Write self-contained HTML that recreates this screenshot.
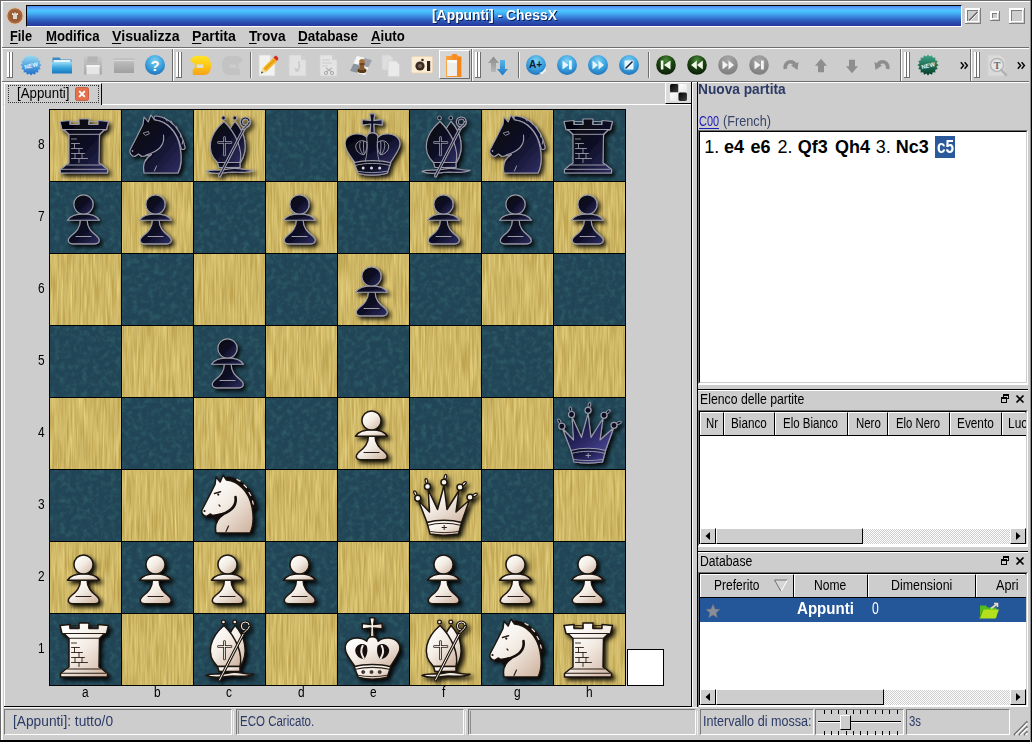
<!DOCTYPE html>
<html><head><meta charset="utf-8"><title>ChessX</title>
<style>
html,body{margin:0;padding:0;}
body{width:1032px;height:742px;overflow:hidden;background:#cdcdcd;font-family:"Liberation Sans",sans-serif;position:relative;}
.a{position:absolute;}
.t{position:absolute;white-space:nowrap;transform-origin:0 0;line-height:1;color:#000;}
.hl{position:absolute;height:1px;}
.vl{position:absolute;width:1px;}
.raised{position:absolute;box-sizing:border-box;border:1px solid;border-color:#fff #000 #000 #fff;background:#cdcdcd;}
.sunk{position:absolute;box-sizing:border-box;border:1px solid;border-color:#7a7a7a #fff #fff #7a7a7a;}
</style></head><body>

<div class="a" style="left:0px;top:0px;width:1032px;height:742px;background:#cdcdcd;"></div>
<div class="hl" style="left:0px;top:0px;width:1032px;background:#6a6a6a"></div>
<div class="vl" style="left:0px;top:0px;height:742px;background:#6a6a6a"></div>
<div class="hl" style="left:1px;top:1px;width:1029px;background:#fff"></div>
<div class="vl" style="left:1px;top:1px;height:739px;background:#fff"></div>
<div class="vl" style="left:2px;top:2px;height:738px;background:#f4f4f4"></div>
<div class="hl" style="left:0px;top:741px;width:1032px;background:#000"></div>
<div class="hl" style="left:0px;top:740px;width:1032px;background:#000"></div>
<div class="vl" style="left:1031px;top:0px;height:742px;background:#000"></div>
<div class="vl" style="left:1030px;top:1px;height:741px;background:#8a8a8a"></div>
<div class="a" style="left:26px;top:5px;width:936px;height:22px;box-sizing:border-box;border:1px solid;border-color:#000 #fff #fff #000;background:linear-gradient(#4a8af0 0%,#60a4fc 11%,#48c8fe 23%,#46b0f4 36%,#3a8ae0 52%,#3068c8 67%,#2a4cae 82%,#28389c 100%)"></div>
<div class="t" style="left:432px;top:8px;font-size:14px;transform:scaleX(0.992);color:#fff;font-weight:bold;text-shadow:1px 1px 0 #0c1c50">[Appunti] - ChessX</div>
<svg class="a" style="left:5px;top:6px" width="20" height="20" viewBox="0 0 20 20"><circle cx="10" cy="10" r="8.2" fill="#a86a40" stroke="#e8c8a8" stroke-width="1"/><circle cx="10" cy="10" r="6" fill="#9a5c34"/><rect x="8" y="8" width="4" height="5" fill="#d8d8d0"/><rect x="7" y="7" width="1.5" height="2" fill="#f0e8e0"/><rect x="11.5" y="7" width="1.5" height="2" fill="#f0e8e0"/><rect x="9.3" y="6.5" width="1.5" height="2" fill="#f0e8e0"/></svg>
<div class="a" style="left:965px;top:8px;width:15px;height:2px;background:#fff;"></div>
<div class="a" style="left:965px;top:8px;width:2px;height:15px;background:#fff;"></div>
<div class="a" style="left:980px;top:8px;width:1px;height:16px;background:#7c7c7c;"></div>
<div class="a" style="left:965px;top:23px;width:16px;height:1px;background:#7c7c7c;"></div>
<div class="a" style="left:967px;top:10px;width:12px;height:1px;background:#7c7c7c;"></div>
<div class="a" style="left:967px;top:10px;width:1px;height:12px;background:#7c7c7c;"></div>
<div class="a" style="left:978px;top:10px;width:1px;height:12px;background:#fff;"></div>
<div class="a" style="left:967px;top:21px;width:12px;height:1px;background:#fff;"></div>
<svg class="a" style="left:965px;top:8px" width="16" height="16"><line x1="4" y1="12.5" x2="12.5" y2="4" stroke="#555" stroke-width="1.1"/><line x1="5" y1="13" x2="13" y2="5" stroke="#fff" stroke-width="0.8"/></svg>
<div class="a" style="left:990px;top:11px;width:9px;height:2px;background:#fff;"></div>
<div class="a" style="left:990px;top:11px;width:2px;height:9px;background:#fff;"></div>
<div class="a" style="left:999px;top:11px;width:1px;height:10px;background:#7c7c7c;"></div>
<div class="a" style="left:990px;top:20px;width:10px;height:1px;background:#7c7c7c;"></div>
<div class="a" style="left:992px;top:13px;width:6px;height:1px;background:#7c7c7c;"></div>
<div class="a" style="left:992px;top:13px;width:1px;height:6px;background:#7c7c7c;"></div>
<div class="a" style="left:997px;top:13px;width:1px;height:6px;background:#fff;"></div>
<div class="a" style="left:992px;top:18px;width:6px;height:1px;background:#fff;"></div>
<div class="a" style="left:1009px;top:8px;width:15px;height:2px;background:#fff;"></div>
<div class="a" style="left:1009px;top:8px;width:2px;height:15px;background:#fff;"></div>
<div class="a" style="left:1024px;top:8px;width:1px;height:16px;background:#7c7c7c;"></div>
<div class="a" style="left:1009px;top:23px;width:16px;height:1px;background:#7c7c7c;"></div>
<div class="a" style="left:1011px;top:10px;width:12px;height:1px;background:#7c7c7c;"></div>
<div class="a" style="left:1011px;top:10px;width:1px;height:12px;background:#7c7c7c;"></div>
<div class="a" style="left:1022px;top:10px;width:1px;height:12px;background:#fff;"></div>
<div class="a" style="left:1011px;top:21px;width:12px;height:1px;background:#fff;"></div>
<div class="t" style="left:10px;top:29px;font-size:14px;transform:scaleX(0.912);color:#000;font-weight:bold;text-underline-offset:2px"><u>F</u>ile</div>
<div class="t" style="left:45.5px;top:29px;font-size:14px;transform:scaleX(0.942);color:#000;font-weight:bold;text-underline-offset:2px"><u>M</u>odifica</div>
<div class="t" style="left:112px;top:29px;font-size:14px;transform:scaleX(1.013);color:#000;font-weight:bold;text-underline-offset:2px"><u>V</u>isualizza</div>
<div class="t" style="left:192px;top:29px;font-size:14px;transform:scaleX(1.005);color:#000;font-weight:bold;text-underline-offset:2px"><u>P</u>artita</div>
<div class="t" style="left:248.6px;top:29px;font-size:14px;transform:scaleX(0.977);color:#000;font-weight:bold;text-underline-offset:2px"><u>T</u>rova</div>
<div class="t" style="left:298px;top:29px;font-size:14px;transform:scaleX(0.964);color:#000;font-weight:bold;text-underline-offset:2px"><u>D</u>atabase</div>
<div class="t" style="left:370.7px;top:29px;font-size:14px;transform:scaleX(0.942);color:#000;font-weight:bold;text-underline-offset:2px"><u>A</u>iuto</div>
<div class="hl" style="left:2px;top:47px;width:1027px;background:#6e6e6e"></div>
<div class="hl" style="left:2px;top:48px;width:1027px;background:#fff"></div>
<div class="hl" style="left:2px;top:81px;width:1027px;background:#6e6e6e"></div>
<div class="hl" style="left:2px;top:82px;width:1027px;background:#fff"></div>
<div class="a" style="left:7px;top:52px;width:2px;height:25px;background:#fff"></div><div class="a" style="left:9px;top:52px;width:1px;height:26px;background:#6e6e6e"></div><div class="a" style="left:7px;top:77px;width:2px;height:1px;background:#6e6e6e"></div><div class="a" style="left:10px;top:52px;width:2px;height:25px;background:#fff"></div><div class="a" style="left:12px;top:52px;width:1px;height:26px;background:#6e6e6e"></div><div class="a" style="left:10px;top:77px;width:2px;height:1px;background:#6e6e6e"></div>
<svg class="a" style="left:20px;top:54px;" width="22" height="22" viewBox="0 0 22 22"><defs><linearGradient id="gnb" x1="0" y1="0" x2="0" y2="1"><stop offset="0" stop-color="#9ae0f6"/><stop offset="1" stop-color="#1a6cc8"/></linearGradient></defs><polygon points="21.5,11.0 19.4,12.7 20.7,15.0 18.2,15.8 18.4,18.4 15.8,18.2 15.0,20.7 12.7,19.4 11.0,21.5 9.3,19.4 7.0,20.7 6.2,18.2 3.6,18.4 3.8,15.8 1.3,15.0 2.6,12.7 0.5,11.0 2.6,9.3 1.3,7.0 3.8,6.2 3.6,3.6 6.2,3.8 7.0,1.3 9.3,2.6 11.0,0.5 12.7,2.6 15.0,1.3 15.8,3.8 18.4,3.6 18.2,6.2 20.7,7.0 19.4,9.3" fill="url(#gnb)"/><text x="11" y="13.6" font-family="Liberation Sans" font-weight="bold" font-size="5.8" fill="#e8f6ff" text-anchor="middle" transform="rotate(-14 11 11)">NEW</text></svg>
<svg class="a" style="left:51px;top:55px;" width="22" height="20" viewBox="0 0 22 20"><defs><linearGradient id="gfo" x1="0" y1="0" x2="0" y2="1"><stop offset="0" stop-color="#9adcf6"/><stop offset="0.5" stop-color="#3aa4de"/><stop offset="1" stop-color="#1a78c0"/></linearGradient></defs><path d="M1.5,2.5 h7 l1.5,2 h10.5 v3 h-19 z" fill="#3a8cc4"/><rect x="2.5" y="5" width="17" height="4" fill="#e8f4fa"/><path d="M1,7 h20 v11.5 h-20 z" fill="url(#gfo)"/></svg>
<svg class="a" style="left:83px;top:55px;" width="20" height="21" viewBox="0 0 20 21"><defs><linearGradient id="gfl" x1="0" y1="0" x2="0" y2="1"><stop offset="0" stop-color="#c8c8c8"/><stop offset="1" stop-color="#a8a8a8"/></linearGradient></defs><path d="M1,1.5 h16 l2,2 v16 h-18 z" fill="url(#gfl)"/><rect x="4.5" y="1.5" width="10" height="6" fill="#b4b4b4"/><rect x="3.5" y="10" width="13" height="9.5" fill="#e6e6e6"/><rect x="3.5" y="10" width="13" height="2" fill="#f4f4f4"/></svg>
<svg class="a" style="left:112px;top:56px;" width="24" height="19" viewBox="0 0 24 19"><defs><linearGradient id="ggf" x1="0" y1="0" x2="0" y2="1"><stop offset="0" stop-color="#bcbcbc"/><stop offset="1" stop-color="#a0a0a0"/></linearGradient></defs><rect x="1.5" y="2" width="21" height="3" fill="#c0c0c0"/><rect x="2" y="5" width="20" height="12" fill="url(#ggf)"/><rect x="1.5" y="4" width="21" height="1.2" fill="#d8d8d8"/></svg>
<svg class="a" style="left:144px;top:54px;" width="22" height="22" viewBox="0 0 22 22"><defs><radialGradient id="ghp" cx="0.5" cy="0.3" r="0.75"><stop offset="0" stop-color="#7fd2f4"/><stop offset="0.55" stop-color="#3aa0dc"/><stop offset="1" stop-color="#1a6cb8"/></radialGradient></defs><circle cx="11" cy="11" r="10" fill="url(#ghp)"/><text x="11" y="16.5" font-family="Liberation Sans" font-weight="bold" font-size="15" fill="#fff" text-anchor="middle">?</text></svg>
<div class="vl" style="left:172px;top:49px;height:32px;background:#6e6e6e"></div><div class="vl" style="left:173px;top:49px;height:32px;background:#fff"></div>
<div class="a" style="left:176px;top:52px;width:2px;height:25px;background:#fff"></div><div class="a" style="left:178px;top:52px;width:1px;height:26px;background:#6e6e6e"></div><div class="a" style="left:176px;top:77px;width:2px;height:1px;background:#6e6e6e"></div><div class="a" style="left:179px;top:52px;width:2px;height:25px;background:#fff"></div><div class="a" style="left:181px;top:52px;width:1px;height:26px;background:#6e6e6e"></div><div class="a" style="left:179px;top:77px;width:2px;height:1px;background:#6e6e6e"></div>
<svg class="a" style="left:189px;top:54px;" width="24" height="22" viewBox="0 0 24 22"><defs><linearGradient id="gun" x1="0" y1="0" x2="0" y2="1"><stop offset="0" stop-color="#ffe428"/><stop offset="0.5" stop-color="#fdc814"/><stop offset="1" stop-color="#f6a21a"/></linearGradient></defs><path fill-rule="evenodd" d="M1.500,5 L6,1.800 L15,2 C20,2 22,6.500 22,11.500 C22,17 20,21 15,21 L4,21 L3.500,16 L6,13.500 L5.500,9.500 L1.500,7.500 Z M7.700,10.500 h6.500 v3.300 h-6.500 z" fill="url(#gun)"/><rect x="7.700" y="10.500" width="6.500" height="3.300" fill="#e4e2cc"/></svg>
<svg class="a" style="left:220px;top:54px;" width="24" height="22" viewBox="0 0 24 22"><path fill-rule="evenodd" d="M22.500,5 L18,1.800 L9,2 C4,2 2,6.500 2,11.500 C2,17 4,21 9,21 L20,21 L20.500,16 L18,13.500 L18.500,9.500 L22.500,7.500 Z M9.800,10.500 h6.500 v3.300 h-6.500 z" fill="#c3c3c3"/></svg>
<div class="vl" style="left:250px;top:52px;height:26px;background:#6e6e6e"></div><div class="vl" style="left:251px;top:52px;height:26px;background:#f4f4f4"></div>
<svg class="a" style="left:256px;top:53px;" width="24" height="25" viewBox="0 0 24 25"><path d="M3,2 h11 l5,5 v16 h-16 z" fill="#f2f2f0" stroke="#d4d4d4" stroke-width="0.8"/><path d="M14,2 v5 h5 z" fill="#dcdcdc"/><path d="M5,20.5 L7,15 L17.5,4.5 L21,8 L10.5,18.5 Z" fill="#f4b21c"/><path d="M17.5,4.5 L19,3 C20,2.2 22.8,5 22.3,6 L21,8 Z" fill="#d8282a"/><path d="M5,20.5 L7,15 L10.5,18.5 Z" fill="#f0d8a0"/><path d="M5,20.5 L5.8,18.3 L7.2,19.7 Z" fill="#3a3a3a"/><path d="M8.6,16.6 L19.2,6.2" stroke="#d88a10" stroke-width="1" fill="none"/></svg>
<svg class="a" style="left:287px;top:53px;" width="22" height="25" viewBox="0 0 22 25"><path d="M2,2 h12 l5,5 v16 h-17 z" fill="#e2e2e2" stroke="#d2d2d2" stroke-width="0.8"/><path d="M14,2 v5 h5 z" fill="#cfcfcf"/><path d="M12,8 C9,11 14,12 10,16 L7,15 L9,19 L13,18 L11.5,16.8 C16,13 10.5,11 13.5,8 Z" fill="#cacaca"/></svg>
<svg class="a" style="left:318px;top:53px;" width="22" height="25" viewBox="0 0 22 25"><path d="M2,2 h12 l5,5 v16 h-17 z" fill="#e4e4e4" stroke="#d2d2d2" stroke-width="0.8"/><path d="M14,2 v5 h5 z" fill="#cfcfcf"/><path d="M4,7 h8 M4,10 h10 M4,13 h6" stroke="#cacaca" stroke-width="1"/><path d="M8,15 l6,4 M14,15 l-6,4" stroke="#b4b4b4" stroke-width="1.3"/><circle cx="8" cy="20" r="1.6" fill="none" stroke="#a8a8a8"/><circle cx="14" cy="20" r="1.6" fill="none" stroke="#a8a8a8"/></svg>
<svg class="a" style="left:349px;top:54px;" width="24" height="23" viewBox="0 0 24 23"><path d="M8,2 L23,6 L16,21 L1,17 Z" fill="#e8e8e8"/><path d="M8,2 L15.5,4 L12,11.5 L4.5,9.5 Z" fill="#f6f6f6"/><path d="M15.5,4 L23,6 L19.5,13.5 L12,11.5 Z" fill="#9aa0a8"/><path d="M4.500,9.5 L12,11.5 L8.5,19 L1,17 Z" fill="#8e949c"/><path d="M12,11.5 L19.5,13.5 L16,21 L8.500,19 Z" fill="#f0f0f0"/><ellipse cx="13" cy="16.5" rx="4.5" ry="2.6" fill="#5c3a1a"/><path d="M10.5,16 C10.5,12 11.5,11 11,9.5 h4 C14.500,11 15.5,12 15.500,16 Z" fill="#8a5a2a"/><ellipse cx="13" cy="7.5" rx="2.8" ry="2.6" fill="#a87038"/><ellipse cx="13" cy="10" rx="3.2" ry="1.1" fill="#6a4420"/></svg>
<svg class="a" style="left:380px;top:53px;" width="22" height="25" viewBox="0 0 22 25"><path d="M2,2 h8 l3,3 v12 h-11 z" fill="#dedede" stroke="#d0d0d0" stroke-width="0.8"/><path d="M8,8 h8 l3.500,3.500 v12 h-11.5 z" fill="#eaeaea" stroke="#d4d4d4" stroke-width="0.8"/></svg>
<svg class="a" style="left:410px;top:55px;" width="24" height="20" viewBox="0 0 24 20"><rect x="1.5" y="1.5" width="21" height="16.500" rx="1.5" fill="#fbecd4" stroke="#ecd4b0" stroke-width="0.8"/><circle cx="10" cy="11" r="4.600" fill="#3a2a22"/><circle cx="10" cy="11" r="2" fill="#7a6458"/><circle cx="12.5" cy="5" r="1.300" fill="#3a2a22"/><rect x="17" y="6" width="3.200" height="10" fill="#2a2220"/></svg>
<div class="a" style="left:439px;top:50px;width:31px;height:29px;box-sizing:border-box;border:1px solid;border-color:#fff #6e6e6e #6e6e6e #fff;background:#d6d6d6"></div>
<svg class="a" style="left:444px;top:52px;" width="20" height="26" viewBox="0 0 20 26"><defs><linearGradient id="gcl" x1="0" y1="0" x2="1" y2="0"><stop offset="0" stop-color="#f8a848"/><stop offset="0.6" stop-color="#f68a1e"/><stop offset="1" stop-color="#f8b060"/></linearGradient></defs><path d="M2,4 h5 l1.500,-2 h4 l1.500,2 h3.500 v21 h-15.500 z" fill="url(#gcl)"/><rect x="3" y="8" width="10" height="16" fill="#f0eeec"/><rect x="3" y="8" width="10" height="3" fill="#fafafa"/><rect x="13.200" y="5" width="4" height="20" fill="#f6861a"/></svg>
<div class="vl" style="left:471px;top:49px;height:32px;background:#6e6e6e"></div><div class="vl" style="left:472px;top:49px;height:32px;background:#fff"></div>
<div class="a" style="left:475px;top:52px;width:2px;height:25px;background:#fff"></div><div class="a" style="left:477px;top:52px;width:1px;height:26px;background:#6e6e6e"></div><div class="a" style="left:475px;top:77px;width:2px;height:1px;background:#6e6e6e"></div><div class="a" style="left:478px;top:52px;width:2px;height:25px;background:#fff"></div><div class="a" style="left:480px;top:52px;width:1px;height:26px;background:#6e6e6e"></div><div class="a" style="left:478px;top:77px;width:2px;height:1px;background:#6e6e6e"></div>
<svg class="a" style="left:487px;top:55px;" width="22" height="22" viewBox="0 0 22 22"><defs><linearGradient id="gua" x1="0" y1="0" x2="0" y2="1"><stop offset="0" stop-color="#8a8a8a"/><stop offset="1" stop-color="#b8b8b8"/></linearGradient><linearGradient id="gda" x1="0" y1="0" x2="0" y2="1"><stop offset="0" stop-color="#5ab4e8"/><stop offset="1" stop-color="#1c78c4"/></linearGradient></defs><path d="M6.500,1.500 L12,8 L9,8 L9,17 L4,17 L4,8 L1,8 Z" fill="url(#gua)"/><path d="M15.500,20.5 L21,14 L18,14 L18,5 L13,5 L13,14 L10,14 Z" fill="url(#gda)"/></svg>
<div class="vl" style="left:518px;top:52px;height:26px;background:#6e6e6e"></div><div class="vl" style="left:519px;top:52px;height:26px;background:#f4f4f4"></div>
<svg class="a" style="left:525px;top:54px;" width="22" height="22" viewBox="0 0 22 22"><defs><radialGradient id="ga1" cx="0.5" cy="0.3" r="0.75"><stop offset="0" stop-color="#7fd2f4"/><stop offset="0.55" stop-color="#3aa0dc"/><stop offset="1" stop-color="#1a6cb8"/></radialGradient></defs><circle cx="11" cy="11" r="10" fill="url(#ga1)"/><path d="M14,19 C18,18 20,15 20.5,12 L21,17 L17,20.5 Z" fill="#e8f0f8"/><text x="10.5" y="14" font-family="Liberation Sans" font-weight="bold" font-size="10" fill="#0a1a3a" text-anchor="middle">A+</text></svg>
<svg class="a" style="left:556px;top:54px;" width="22" height="22" viewBox="0 0 22 22"><defs><radialGradient id="ga2" cx="0.5" cy="0.3" r="0.75"><stop offset="0" stop-color="#7fd2f4"/><stop offset="0.55" stop-color="#3aa0dc"/><stop offset="1" stop-color="#1a6cb8"/></radialGradient></defs><circle cx="11" cy="11" r="10" fill="url(#ga2)"/><path d="M6.500,6.500 L12.500,11 L6.500,15.500 Z" fill="#eaf6ff"/><rect x="13" y="6.500" width="2.800" height="9" fill="#eaf6ff"/></svg>
<svg class="a" style="left:587px;top:54px;" width="22" height="22" viewBox="0 0 22 22"><defs><radialGradient id="ga3" cx="0.5" cy="0.3" r="0.75"><stop offset="0" stop-color="#7fd2f4"/><stop offset="0.55" stop-color="#3aa0dc"/><stop offset="1" stop-color="#1a6cb8"/></radialGradient></defs><circle cx="11" cy="11" r="10" fill="url(#ga3)"/><path d="M5.500,6.500 L11,11 L5.500,15.500 Z M11.500,6.500 L17,11 L11.500,15.500 Z" fill="#eaf6ff"/></svg>
<svg class="a" style="left:618px;top:54px;" width="22" height="22" viewBox="0 0 22 22"><defs><radialGradient id="ga4" cx="0.5" cy="0.3" r="0.75"><stop offset="0" stop-color="#7fd2f4"/><stop offset="0.55" stop-color="#3aa0dc"/><stop offset="1" stop-color="#1a6cb8"/></radialGradient></defs><circle cx="11" cy="11" r="10" fill="url(#ga4)"/><rect x="6.500" y="6.500" width="9" height="9" fill="#eaf6ff"/><path d="M7.500,14.500 L14.500,7.500" stroke="#1a2a4a" stroke-width="1.600"/></svg>
<div class="vl" style="left:648px;top:52px;height:26px;background:#6e6e6e"></div><div class="vl" style="left:649px;top:52px;height:26px;background:#f4f4f4"></div>
<svg class="a" style="left:655px;top:54px;" width="22" height="22" viewBox="0 0 22 22"><defs><radialGradient id="gd1" cx="0.5" cy="0.25" r="0.8"><stop offset="0" stop-color="#4a8a3a"/><stop offset="0.45" stop-color="#1c4412"/><stop offset="1" stop-color="#081806"/></radialGradient></defs><circle cx="11" cy="11" r="9.8" fill="url(#gd1)"/><rect x="5.800" y="6.500" width="2.600" height="9" fill="#f0f8e8"/><path d="M15.500,6.500 L9,11 L15.500,15.500 Z" fill="#f0f8e8"/></svg>
<svg class="a" style="left:686px;top:54px;" width="22" height="22" viewBox="0 0 22 22"><defs><radialGradient id="gd2" cx="0.5" cy="0.25" r="0.8"><stop offset="0" stop-color="#4a8a3a"/><stop offset="0.45" stop-color="#1c4412"/><stop offset="1" stop-color="#081806"/></radialGradient></defs><circle cx="11" cy="11" r="9.8" fill="url(#gd2)"/><path d="M10.800,6.500 L5,11 L10.800,15.500 Z M16.800,6.500 L11,11 L16.800,15.500 Z" fill="#f0f8e8"/></svg>
<svg class="a" style="left:717px;top:54px;" width="22" height="22" viewBox="0 0 22 22"><defs><radialGradient id="gd3" cx="0.5" cy="0.25" r="0.8"><stop offset="0" stop-color="#a8a8a8"/><stop offset="0.6" stop-color="#8c8c8c"/><stop offset="1" stop-color="#7a7a7a"/></radialGradient></defs><circle cx="11" cy="11" r="9.8" fill="url(#gd3)"/><path d="M5.500,6.500 L11,11 L5.500,15.500 Z M11.500,6.500 L17,11 L11.500,15.500 Z" fill="#f4f4f4"/></svg>
<svg class="a" style="left:748px;top:54px;" width="22" height="22" viewBox="0 0 22 22"><defs><radialGradient id="gd4" cx="0.5" cy="0.25" r="0.8"><stop offset="0" stop-color="#a8a8a8"/><stop offset="0.6" stop-color="#8c8c8c"/><stop offset="1" stop-color="#7a7a7a"/></radialGradient></defs><circle cx="11" cy="11" r="9.8" fill="url(#gd4)"/><path d="M6.500,6.500 L12.500,11 L6.500,15.500 Z" fill="#f4f4f4"/><rect x="13" y="6.500" width="2.800" height="9" fill="#f4f4f4"/></svg>
<svg class="a" style="left:779px;top:54px;" width="22" height="22" viewBox="0 0 22 22"><path d="M6.300,15 C5.500,9.500 9.500,7 13,8 C14.500,8.500 15.500,9.500 16,10.500" fill="none" stroke="#8e8e8e" stroke-width="3.600"/><path d="M12,11.500 L19.500,8 L18.500,16 Z" fill="#8e8e8e"/></svg>
<svg class="a" style="left:811px;top:56px;" width="20" height="20" viewBox="0 0 20 20"><path d="M10,2.800 L16,9.800 L13,9.800 L13,16.200 L7,16.200 L7,9.800 L4,9.800 Z" fill="#8e8e8e"/></svg>
<svg class="a" style="left:842px;top:56px;" width="20" height="20" viewBox="0 0 20 20"><path d="M10,17.200 L16,10.200 L13,10.200 L13,3.800 L7,3.800 L7,10.200 L4,10.200 Z" fill="#8e8e8e"/></svg>
<svg class="a" style="left:872px;top:54px;" width="22" height="22" viewBox="0 0 22 22"><path d="M15.700,15 C16.500,9.500 12.500,7 9,8 C7.500,8.500 6.500,9.500 6,10.500" fill="none" stroke="#8e8e8e" stroke-width="3.600"/><path d="M10,11.500 L2.500,8 L3.500,16 Z" fill="#8e8e8e"/></svg>
<div class="vl" style="left:900px;top:49px;height:32px;background:#6e6e6e"></div><div class="vl" style="left:901px;top:49px;height:32px;background:#fff"></div>
<div class="a" style="left:904px;top:52px;width:2px;height:25px;background:#fff"></div><div class="a" style="left:906px;top:52px;width:1px;height:26px;background:#6e6e6e"></div><div class="a" style="left:904px;top:77px;width:2px;height:1px;background:#6e6e6e"></div><div class="a" style="left:907px;top:52px;width:2px;height:25px;background:#fff"></div><div class="a" style="left:909px;top:52px;width:1px;height:26px;background:#6e6e6e"></div><div class="a" style="left:907px;top:77px;width:2px;height:1px;background:#6e6e6e"></div>
<svg class="a" style="left:917px;top:54px;" width="22" height="22" viewBox="0 0 22 22"><defs><linearGradient id="gng" x1="0" y1="0" x2="0" y2="1"><stop offset="0" stop-color="#3ea888"/><stop offset="1" stop-color="#063a26"/></linearGradient></defs><polygon points="21.5,11.0 19.4,12.7 20.7,15.0 18.2,15.8 18.4,18.4 15.8,18.2 15.0,20.7 12.7,19.4 11.0,21.5 9.3,19.4 7.0,20.7 6.2,18.2 3.6,18.4 3.8,15.8 1.3,15.0 2.6,12.7 0.5,11.0 2.6,9.3 1.3,7.0 3.8,6.2 3.6,3.6 6.2,3.8 7.0,1.3 9.3,2.6 11.0,0.5 12.7,2.6 15.0,1.3 15.8,3.8 18.4,3.6 18.2,6.2 20.7,7.0 19.4,9.3" fill="url(#gng)"/><text x="11" y="13.6" font-family="Liberation Sans" font-weight="bold" font-size="5.8" fill="#e8f6ff" text-anchor="middle" transform="rotate(-14 11 11)">NEW</text></svg>
<svg class="a" style="left:960px;top:61px" width="9" height="9" viewBox="0 0 9 9"><path d="M0.800,1.300 L3.600,4.500 L0.800,7.700 M4.600,1.300 L7.400,4.500 L4.600,7.700" fill="none" stroke="#000" stroke-width="1.400"/></svg>
<div class="vl" style="left:970px;top:49px;height:32px;background:#6e6e6e"></div><div class="vl" style="left:971px;top:49px;height:32px;background:#fff"></div>
<div class="a" style="left:974px;top:52px;width:2px;height:25px;background:#fff"></div><div class="a" style="left:976px;top:52px;width:1px;height:26px;background:#6e6e6e"></div><div class="a" style="left:974px;top:77px;width:2px;height:1px;background:#6e6e6e"></div><div class="a" style="left:977px;top:52px;width:2px;height:25px;background:#fff"></div><div class="a" style="left:979px;top:52px;width:1px;height:26px;background:#6e6e6e"></div><div class="a" style="left:977px;top:77px;width:2px;height:1px;background:#6e6e6e"></div>
<svg class="a" style="left:985px;top:53px;" width="24" height="26" viewBox="0 0 24 26"><path d="M3,2 h12 l5,5 v16 h-17 z" fill="#dadada" stroke="#d0d0d0" stroke-width="0.8"/><circle cx="12" cy="12" r="6.500" fill="#e6e6e6" stroke="#b8b8b8" stroke-width="1.500"/><path d="M16.500,17 L21,22" stroke="#b0b0b0" stroke-width="2.500" stroke-linecap="round"/><text x="12" y="16" font-family="Liberation Serif" font-weight="bold" font-size="10" fill="#6a6a6a" text-anchor="middle">T</text></svg>
<svg class="a" style="left:1017px;top:61px" width="9" height="9" viewBox="0 0 9 9"><path d="M0.800,1.300 L3.600,4.500 L0.800,7.700 M4.600,1.300 L7.400,4.500 L4.600,7.700" fill="none" stroke="#000" stroke-width="1.400"/></svg>
<div class="hl" style="left:102px;top:104px;width:589px;background:#fff"></div>
<div class="vl" style="left:4px;top:84px;height:622px;background:#fff"></div>
<div class="a" style="left:4px;top:83px;width:98px;height:22px;box-sizing:border-box;border:1px solid;border-color:#fff #000 #cdcdcd #fff;background:#cdcdcd"></div>
<div class="vl" style="left:101px;top:84px;height:21px;background:#000"></div>
<div class="a" style="left:8px;top:85px;width:91px;height:18px;box-sizing:border-box;border:1px dotted #333"></div>
<div class="t" style="left:17px;top:86px;font-size:14px;transform:scaleX(0.950);color:#000;font-weight:normal;">[Appunti]</div>
<svg class="a" style="left:75px;top:87px" width="14" height="14" viewBox="0 0 15 15"><rect x="0.500" y="0.500" width="14" height="14" rx="2" fill="#e4704c" stroke="#c85a3c"/><path d="M4.500,4.500 L10.500,10.500 M10.500,4.500 L4.500,10.500" stroke="#fff" stroke-width="2"/></svg>
<div class="a" style="left:665px;top:82px;width:27px;height:22px;box-sizing:border-box;border:1px solid;border-color:#fff #000 #000 #fff;background:#dcdcdc"></div>
<svg class="a" style="left:669px;top:83px" width="19" height="19" viewBox="0 0 18 18"><defs><linearGradient id="ck1" x1="0" y1="0" x2="1" y2="1"><stop offset="0" stop-color="#000"/><stop offset="1" stop-color="#444"/></linearGradient><linearGradient id="ck2" x1="0" y1="0" x2="1" y2="1"><stop offset="0" stop-color="#fff"/><stop offset="1" stop-color="#e6e6e6"/></linearGradient></defs><rect x="1" y="1" width="8" height="8" rx="1.500" fill="url(#ck1)"/><rect x="9" y="1" width="8" height="8" rx="1.500" fill="url(#ck2)"/><rect x="1" y="9" width="8" height="8" rx="1.500" fill="url(#ck2)"/><rect x="9" y="9" width="8" height="8" rx="1.500" fill="url(#ck1)"/></svg>
<svg class="a" style="left:49px;top:109px" width="577" height="577" viewBox="0 0 577 577">
<defs>
<linearGradient id="gw" x1="0.15" y1="0.1" x2="0.9" y2="0.95"><stop offset="0" stop-color="#ffffff"/><stop offset="0.45" stop-color="#f3ece4"/><stop offset="1" stop-color="#d2b8a6"/></linearGradient>
<linearGradient id="gb" x1="0.1" y1="0.1" x2="0.95" y2="0.9"><stop offset="0" stop-color="#03030c"/><stop offset="0.55" stop-color="#101029"/><stop offset="1" stop-color="#2b2a5c"/></linearGradient>
<linearGradient id="gbq" x1="0.1" y1="0.1" x2="0.95" y2="0.9"><stop offset="0" stop-color="#080820"/><stop offset="0.5" stop-color="#26245c"/><stop offset="1" stop-color="#46438e"/></linearGradient>
<filter id="sh" x="-20%" y="-20%" width="150%" height="150%"><feDropShadow dx="2.6" dy="2.8" stdDeviation="1.9" flood-color="#000" flood-opacity="0.95"/></filter>
<filter id="nz" color-interpolation-filters="sRGB" x="0" y="0" width="100%" height="100%"><feTurbulence type="fractalNoise" baseFrequency="0.18" numOctaves="3" seed="4" result="n"/><feColorMatrix in="n" type="matrix" values="0 0 0 0 0.19  0 0 0 0 0.38  0 0 0 0 0.42  1.8 0 0 0 -0.78"/></filter>
<filter id="w1" color-interpolation-filters="sRGB" x="0" y="0" width="100%" height="100%"><feTurbulence type="fractalNoise" baseFrequency="0.5 0.025" numOctaves="2" seed="11" result="n"/><feColorMatrix in="n" type="matrix" values="0 0 0 0 0.93  0 0 0 0 0.85  0 0 0 0 0.52  1.6 0 0 0 -0.55"/></filter>
<filter id="w2" color-interpolation-filters="sRGB" x="0" y="0" width="100%" height="100%"><feTurbulence type="fractalNoise" baseFrequency="0.55 0.03" numOctaves="2" seed="23" result="n"/><feColorMatrix in="n" type="matrix" values="0 0 0 0 0.70  0 0 0 0 0.58  0 0 0 0 0.24  1.6 0 0 0 -0.66"/></filter>
<g id="wK"><g transform="translate(-0.8,0.3)"><path d="M33.5,4.5 h5 l-1,6.8 l8.500,-1 v5.400 l-8.500,-1 l0.5,9 h-4 l0.5,-9 l-8.500,1 v-5.400 l8.500,1 Z" fill="url(#gw)" stroke="#1c130d" stroke-width="1.5" stroke-linejoin="round" /><path d="M36,23.5 C33,23.5 31,25.5 30.5,28 C25,23 14,23.5 10,30 C6.5,36.5 12,44 19,53.5 L54,53.5 C60,44 66.5,36.5 62.5,30 C58.5,23.5 47,23 42,28 C41.5,25.5 39.5,23.5 36,23.5 Z" fill="url(#gw)" stroke="#1c130d" stroke-width="1.5" stroke-linejoin="round" /><path d="M18,53.5 C28,50.5 44,50.5 54.5,53.5 L51,64 C42,66.2 30,66.2 22,64 Z" fill="url(#gw)" stroke="#1c130d" stroke-width="1.5" stroke-linejoin="round" /><path d="M19.5,56 C29,53.4 43,53.4 53,56" fill="none" stroke="#2a1d14" stroke-width="1.1" stroke-linecap="round" stroke-linejoin="round"/><path d="M22,62 C30,63.8 42,63.8 50.5,62" fill="none" stroke="#2a1d14" stroke-width="0.9" stroke-linecap="round" stroke-linejoin="round"/><circle cx="27" cy="58.7" r="1.6" fill="#4a3a30" stroke="#1c130d" stroke-width="0.6"/><circle cx="35.3" cy="58.7" r="1.6" fill="#4a3a30" stroke="#1c130d" stroke-width="0.6"/><circle cx="43.5" cy="58.7" r="1.6" fill="#4a3a30" stroke="#1c130d" stroke-width="0.6"/><path d="M30.5,32.5 C26,28.5 19.5,31.5 19,37 C19,42 24,46 28,46 C31,42 32,37 30.5,32.5 Z" fill="#17110d"/><path d="M41.5,32.5 C46,28.500 52.5,31.5 53,37 C53,42 48,46 44,46 C41,42 40,37 41.5,32.5 Z" fill="#17110d"/><path d="M26.500,32.5 C24.500,36 25,41 27.5,45" fill="none" stroke="#f2ece6" stroke-width="2.0" stroke-linecap="round" stroke-linejoin="round"/><path d="M45.5,32.5 C47.5,36 47,41 44.5,45" fill="none" stroke="#f2ece6" stroke-width="2.0" stroke-linecap="round" stroke-linejoin="round"/></g></g>
<g id="bK"><g transform="translate(-0.8,0.3)"><path d="M33.5,4.5 h5 l-1,6.8 l8.500,-1 v5.400 l-8.500,-1 l0.5,9 h-4 l0.5,-9 l-8.500,1 v-5.400 l8.500,1 Z" fill="url(#gb)" stroke="#9a9aa8" stroke-width="1.15" stroke-linejoin="round" /><path d="M36,23.5 C33,23.5 31,25.5 30.5,28 C25,23 14,23.5 10,30 C6.5,36.5 12,44 19,53.5 L54,53.5 C60,44 66.5,36.5 62.5,30 C58.5,23.5 47,23 42,28 C41.5,25.5 39.5,23.5 36,23.5 Z" fill="url(#gb)" stroke="#9a9aa8" stroke-width="1.15" stroke-linejoin="round" /><path d="M18,53.5 C28,50.5 44,50.5 54.5,53.5 L51,64 C42,66.2 30,66.2 22,64 Z" fill="url(#gb)" stroke="#9a9aa8" stroke-width="1.15" stroke-linejoin="round" /><path d="M19.5,56 C29,53.4 43,53.4 53,56" fill="none" stroke="#9a9aa8" stroke-width="1.0" stroke-linecap="round" stroke-linejoin="round"/><path d="M22,62 C30,63.8 42,63.8 50.5,62" fill="none" stroke="#9a9aa8" stroke-width="0.9" stroke-linecap="round" stroke-linejoin="round"/><circle cx="27" cy="58.7" r="1.5" fill="#d8d8e8"/><circle cx="35.3" cy="58.7" r="1.5" fill="#d8d8e8"/><circle cx="43.5" cy="58.7" r="1.5" fill="#d8d8e8"/><path d="M30.5,33 C26,29.5 20,32 19.5,37 C19.5,42 24,45 27.5,45.5 C30.5,42 31.5,37 30.5,33 Z" fill="none" stroke="#9a9aa8" stroke-width="1.0" stroke-linecap="round" stroke-linejoin="round"/><path d="M41.5,33 C46,29.5 52,32 52.5,37 C52.5,42 48,45 44.5,45.5 C41.5,42 40.5,37 41.5,33 Z" fill="none" stroke="#9a9aa8" stroke-width="1.0" stroke-linecap="round" stroke-linejoin="round"/><path d="M24,33 C22.5,37 24,42 27,45 M27.5,32 C27,37 27.5,42 28,45" fill="none" stroke="#9a9aa8" stroke-width="0.9" stroke-linecap="round" stroke-linejoin="round"/><path d="M48,33 C49.5,37 48,42 45,45 M44.5,32 C45,37 44.5,42 44,45" fill="none" stroke="#9a9aa8" stroke-width="0.9" stroke-linecap="round" stroke-linejoin="round"/><path d="M30.5,28 C31.5,36 31,46 29,52 M41.5,28 C40.5,36 41,46 43,52" fill="none" stroke="#9a9aa8" stroke-width="0.9" stroke-linecap="round" stroke-linejoin="round"/></g></g>
<g id="wQ"><path d="M18,53.5 L9.5,31.5 L20.5,43 L19.2,20.5 L28.5,40.5 L35,16.5 L38,40.5 L50,21.5 L47,43 L60.5,31 L52.5,53.5 Z" fill="url(#gw)" stroke="#1c130d" stroke-width="1.5" stroke-linejoin="round" /><path d="M18,53.5 C28,50.5 42,50.5 52.5,53.5 L49.5,65 C40,66.5 30,66.5 21,65 Z" fill="url(#gw)" stroke="#1c130d" stroke-width="1.5" stroke-linejoin="round" /><path d="M19.3,56.3 C28,53.6 42,53.6 51.3,56.3" fill="none" stroke="#2a1d14" stroke-width="1.1" stroke-linecap="round" stroke-linejoin="round"/><path d="M21.5,62.5 C30,64 40,64 49.5,62.5" fill="none" stroke="#2a1d14" stroke-width="0.9" stroke-linecap="round" stroke-linejoin="round"/><path d="M33,58.5 h4.5 M35.2,56.5 v4" fill="none" stroke="#2a1d14" stroke-width="1.0" stroke-linecap="round" stroke-linejoin="round"/><ellipse cx="6.3" cy="24.2" rx="1.25" ry="2.5" transform="rotate(-27 6.3 24.2)" fill="#f6f2ec" stroke="#1c130d" stroke-width="1.20"/><circle cx="8.8" cy="29.2" r="3" fill="#f6f2ec" stroke="#1c130d" stroke-width="1.5"/><ellipse cx="17.4" cy="12.0" rx="1.25" ry="2.5" transform="rotate(-11 17.4 12.0)" fill="#f6f2ec" stroke="#1c130d" stroke-width="1.20"/><circle cx="18.5" cy="17.5" r="3" fill="#f6f2ec" stroke="#1c130d" stroke-width="1.5"/><ellipse cx="36.4" cy="7.9" rx="1.25" ry="2.5" transform="rotate(14 36.4 7.9)" fill="#f6f2ec" stroke="#1c130d" stroke-width="1.20"/><circle cx="35" cy="13.3" r="3" fill="#f6f2ec" stroke="#1c130d" stroke-width="1.5"/><ellipse cx="55.2" cy="14.6" rx="1.25" ry="2.5" transform="rotate(49 55.2 14.6)" fill="#f6f2ec" stroke="#1c130d" stroke-width="1.20"/><circle cx="51" cy="18.3" r="3" fill="#f6f2ec" stroke="#1c130d" stroke-width="1.5"/><ellipse cx="66.0" cy="25.8" rx="1.25" ry="2.5" transform="rotate(63 66.0 25.8)" fill="#f6f2ec" stroke="#1c130d" stroke-width="1.20"/><circle cx="61" cy="28.3" r="3" fill="#f6f2ec" stroke="#1c130d" stroke-width="1.5"/></g>
<g id="bQ"><path d="M18,53.5 L9.5,31.5 L20.5,43 L19.2,20.5 L28.5,40.5 L35,16.5 L38,40.5 L50,21.5 L47,43 L60.5,31 L52.5,53.5 Z" fill="url(#gbq)" stroke="#9a9aa8" stroke-width="1.15" stroke-linejoin="round" /><path d="M18,53.5 C28,50.5 42,50.5 52.5,53.5 L49.5,65 C40,66.5 30,66.5 21,65 Z" fill="url(#gbq)" stroke="#9a9aa8" stroke-width="1.15" stroke-linejoin="round" /><path d="M19.3,56.3 C28,53.6 42,53.6 51.3,56.3" fill="none" stroke="#9a9aa8" stroke-width="1.0" stroke-linecap="round" stroke-linejoin="round"/><path d="M21.5,62.5 C30,64 40,64 49.5,62.5" fill="none" stroke="#9a9aa8" stroke-width="0.9" stroke-linecap="round" stroke-linejoin="round"/><path d="M33,58.5 h4.5 M35.2,56.5 v4" fill="none" stroke="#9a9aa8" stroke-width="1.0" stroke-linecap="round" stroke-linejoin="round"/><ellipse cx="6.3" cy="24.2" rx="1.25" ry="2.5" transform="rotate(-27 6.3 24.2)" fill="#0c0c22" stroke="#9a9aa8" stroke-width="0.92"/><circle cx="8.8" cy="29.2" r="3" fill="#0c0c22" stroke="#9a9aa8" stroke-width="1.15"/><ellipse cx="17.4" cy="12.0" rx="1.25" ry="2.5" transform="rotate(-11 17.4 12.0)" fill="#0c0c22" stroke="#9a9aa8" stroke-width="0.92"/><circle cx="18.5" cy="17.5" r="3" fill="#0c0c22" stroke="#9a9aa8" stroke-width="1.15"/><ellipse cx="36.4" cy="7.9" rx="1.25" ry="2.5" transform="rotate(14 36.4 7.9)" fill="#0c0c22" stroke="#9a9aa8" stroke-width="0.92"/><circle cx="35" cy="13.3" r="3" fill="#0c0c22" stroke="#9a9aa8" stroke-width="1.15"/><ellipse cx="55.2" cy="14.6" rx="1.25" ry="2.5" transform="rotate(49 55.2 14.6)" fill="#0c0c22" stroke="#9a9aa8" stroke-width="0.92"/><circle cx="51" cy="18.3" r="3" fill="#0c0c22" stroke="#9a9aa8" stroke-width="1.15"/><ellipse cx="66.0" cy="25.8" rx="1.25" ry="2.5" transform="rotate(63 66.0 25.8)" fill="#0c0c22" stroke="#9a9aa8" stroke-width="0.92"/><circle cx="61" cy="28.3" r="3" fill="#0c0c22" stroke="#9a9aa8" stroke-width="1.15"/></g>
<g id="wR"><path d="M11,12.5 L21,11.5 L21,15.5 L30,15.5 L30,10 L40,10 L40,15.5 L49,15.5 L49,11.5 L59.500,12.5 L57.5,20.5 L54.5,21.5 L50.5,25.5 L50,54 L53,56 L58.5,60.5 L58.5,64 L11.5,64 L11.5,60.5 L17,56 L20,54 L20,25.5 L16,21.5 L13,20.5 Z" fill="url(#gw)" stroke="#1c130d" stroke-width="1.5" stroke-linejoin="round" /><path d="M14,20.5 H56.5" fill="none" stroke="#2a1d14" stroke-width="1.1" stroke-linecap="round" stroke-linejoin="round"/><path d="M19.5,25.3 H51" fill="none" stroke="#2a1d14" stroke-width="1.1" stroke-linecap="round" stroke-linejoin="round"/><path d="M18,56 H51.5" fill="none" stroke="#2a1d14" stroke-width="1.1" stroke-linecap="round" stroke-linejoin="round"/><path d="M12.5,60.3 H56.5" fill="none" stroke="#2a1d14" stroke-width="1.1" stroke-linecap="round" stroke-linejoin="round"/><path d="M21.500,12.5 h8.5 v3 h-8.5 Z M40,12.5 h8.5 v3 h-8.5 Z" fill="none" stroke="#2a1d14" stroke-width="0.9" stroke-linecap="round" stroke-linejoin="round"/><path d="M22.5,30 h5 M22.5,34.5 h8 M22.5,39.5 h11 M22.5,44.5 h13 M22.5,49.5 h16 M25.5,34.5 v5 M30,39.5 v5 M26,44.5 v5 M33,44.5 v5 M30,49.5 v4" fill="none" stroke="#2a1d14" stroke-width="0.9" stroke-linecap="round" stroke-linejoin="round"/></g>
<g id="bR"><path d="M11,12.5 L21,11.5 L21,15.5 L30,15.5 L30,10 L40,10 L40,15.5 L49,15.5 L49,11.5 L59.500,12.5 L57.5,20.5 L54.5,21.5 L50.5,25.5 L50,54 L53,56 L58.5,60.5 L58.5,64 L11.5,64 L11.5,60.5 L17,56 L20,54 L20,25.5 L16,21.5 L13,20.5 Z" fill="url(#gb)" stroke="#9a9aa8" stroke-width="1.15" stroke-linejoin="round" /><path d="M14,20.5 H56.5" fill="none" stroke="#9a9aa8" stroke-width="1.0" stroke-linecap="round" stroke-linejoin="round"/><path d="M19.5,25.3 H51" fill="none" stroke="#9a9aa8" stroke-width="1.0" stroke-linecap="round" stroke-linejoin="round"/><path d="M18,56 H51.5" fill="none" stroke="#9a9aa8" stroke-width="1.0" stroke-linecap="round" stroke-linejoin="round"/><path d="M12.5,60.3 H56.5" fill="none" stroke="#9a9aa8" stroke-width="1.0" stroke-linecap="round" stroke-linejoin="round"/><path d="M21.500,12.5 h8.5 v3 h-8.5 Z M40,12.5 h8.5 v3 h-8.5 Z" fill="none" stroke="#9a9aa8" stroke-width="0.9" stroke-linecap="round" stroke-linejoin="round"/><path d="M22.5,30 h5 M22.5,34.5 h8 M22.5,39.5 h11 M22.5,44.5 h13 M22.5,49.5 h16 M25.5,34.5 v5 M30,39.5 v5 M26,44.5 v5 M33,44.5 v5 M30,49.5 v4" fill="none" stroke="#9a9aa8" stroke-width="0.9" stroke-linecap="round" stroke-linejoin="round"/></g>
<g id="wB"><path d="M42,12.5 C52,23 56,40 47.5,53.5 L31,53.5 C29,40 33,24 42,12.5 Z" fill="url(#gw)" stroke="#1c130d" stroke-width="1.5" stroke-linejoin="round" /><path d="M31,12.5 C17.500,24 11.500,41 24.5,53.5 L47,53.5 C50,41 43,24 31,12.5 Z" fill="url(#gw)" stroke="#1c130d" stroke-width="1.5" stroke-linejoin="round" /><circle cx="30.5" cy="9" r="1.9" fill="url(#gw)" stroke="#1c130d" stroke-width="1.2000000000000002"/><circle cx="41.8" cy="9" r="1.9" fill="url(#gw)" stroke="#1c130d" stroke-width="1.2000000000000002"/><path d="M24.5,53.5 L47,53.5 L47,58.5 L26,58.5 Z" fill="url(#gw)" stroke="#1c130d" stroke-width="1.5" stroke-linejoin="round" /><path d="M13,62.5 C20,59.5 27,62.5 36,60 C45,57.5 52,62 61,61.2 C53,65 45,62.500 36,63.2 C28,64.500 20,65.5 13,62.5 Z" fill="url(#gw)" stroke="#1c130d" stroke-width="1.5" stroke-linejoin="round" /><path d="M31.5,28.5 V46 M25.5,33.5 H38" fill="none" stroke="#2a1d14" stroke-width="2.6" stroke-linecap="round" stroke-linejoin="round"/><path d="M31.5,28.5 V46 M25.5,33.5 H38" fill="none" stroke="#f4efe6" stroke-width="0.9" stroke-linecap="round" stroke-linejoin="round"/><path d="M26.5,67 L51,19.5" fill="none" stroke="#1c130d" stroke-width="3.0" stroke-linecap="round" stroke-linejoin="round"/><path d="M26.5,67 L51,19.5" fill="none" stroke="#f4efe6" stroke-width="1.0" stroke-linecap="round" stroke-linejoin="round"/><circle cx="52.3" cy="13" r="4" fill="none" stroke="#1c130d" stroke-width="3"/><circle cx="52.3" cy="13" r="4" fill="none" stroke="#f4efe6" stroke-width="1"/><path d="M51,19.5 C52.5,17.5 55,17 56.3,13.5" fill="none" stroke="#1c130d" stroke-width="3.0" stroke-linecap="round" stroke-linejoin="round"/><path d="M51,19.5 C52.5,17.5 55,17 56.3,13.5" fill="none" stroke="#f4efe6" stroke-width="1.0" stroke-linecap="round" stroke-linejoin="round"/></g>
<g id="bB"><path d="M42,12.5 C52,23 56,40 47.5,53.5 L31,53.5 C29,40 33,24 42,12.5 Z" fill="url(#gb)" stroke="#9a9aa8" stroke-width="1.15" stroke-linejoin="round" /><path d="M31,12.5 C17.500,24 11.500,41 24.5,53.5 L47,53.5 C50,41 43,24 31,12.5 Z" fill="url(#gb)" stroke="#9a9aa8" stroke-width="1.15" stroke-linejoin="round" /><circle cx="30.5" cy="9" r="1.9" fill="url(#gb)" stroke="#9a9aa8" stroke-width="0.9199999999999999"/><circle cx="41.8" cy="9" r="1.9" fill="url(#gb)" stroke="#9a9aa8" stroke-width="0.9199999999999999"/><path d="M24.5,53.5 L47,53.5 L47,58.5 L26,58.5 Z" fill="url(#gb)" stroke="#9a9aa8" stroke-width="1.15" stroke-linejoin="round" /><path d="M13,62.5 C20,59.5 27,62.5 36,60 C45,57.5 52,62 61,61.2 C53,65 45,62.500 36,63.2 C28,64.500 20,65.5 13,62.5 Z" fill="url(#gb)" stroke="#9a9aa8" stroke-width="1.15" stroke-linejoin="round" /><path d="M31.5,28.5 V46 M25.5,33.5 H38" fill="none" stroke="#9a9aa8" stroke-width="2.6" stroke-linecap="round" stroke-linejoin="round"/><path d="M31.5,28.5 V46 M25.5,33.5 H38" fill="none" stroke="#14142e" stroke-width="0.9" stroke-linecap="round" stroke-linejoin="round"/><path d="M26.5,67 L51,19.5" fill="none" stroke="#9a9aa8" stroke-width="3.0" stroke-linecap="round" stroke-linejoin="round"/><path d="M26.5,67 L51,19.5" fill="none" stroke="#14142e" stroke-width="1.0" stroke-linecap="round" stroke-linejoin="round"/><circle cx="52.3" cy="13" r="4" fill="none" stroke="#9a9aa8" stroke-width="3"/><circle cx="52.3" cy="13" r="4" fill="none" stroke="#14142e" stroke-width="1"/><path d="M51,19.5 C52.5,17.5 55,17 56.3,13.5" fill="none" stroke="#9a9aa8" stroke-width="3.0" stroke-linecap="round" stroke-linejoin="round"/><path d="M51,19.5 C52.5,17.5 55,17 56.3,13.5" fill="none" stroke="#14142e" stroke-width="1.0" stroke-linecap="round" stroke-linejoin="round"/></g>
<g id="wN"><path d="M35,9.5 C48,11 58,22 61.5,38" fill="none" stroke="#15100c" stroke-width="4.2" stroke-linecap="round" stroke-linejoin="round"/><path d="M44,10.5 l3,1.6 M51,16 l2.5,2.5 M56,23.5 l1.8,3 M59.5,32 l0.8,3.2" fill="none" stroke="#e8e0d8" stroke-width="1.2" stroke-linecap="round" stroke-linejoin="round"/><path d="M23,64 C21.5,57 23.5,50 30.5,45.5 L21,47.5 L17.5,45 L13.5,47.5 C10.5,47 8,44 9,41 L16,27.5 L22,15.5 L23,8 L27.2,13 L30,6 L33.5,11 C45,12 56,22 59,38 C61,48 60,58 57,64 Z" fill="url(#gw)" stroke="#1c130d" stroke-width="1.5" stroke-linejoin="round" /><path d="M42.5,28 C44,37 38,43 25,46.5" fill="none" stroke="#15100c" stroke-width="2.6" stroke-linecap="round" stroke-linejoin="round"/><path d="M15.500,46.5 L32,43.500 C28,46.500 25.500,50 24,54 L20.500,48.800 Z" fill="#15100c"/><path d="M21.500,24.500 L27.500,22.800" fill="none" stroke="#2a1d14" stroke-width="1.5" stroke-linecap="round" stroke-linejoin="round"/><circle cx="25.3" cy="25.600" r="1.1" fill="#15100c"/><circle cx="11.5" cy="42" r="1.1" fill="#15100c"/><path d="M26,36 l1,1.2" fill="none" stroke="#2a1d14" stroke-width="1.2" stroke-linecap="round" stroke-linejoin="round"/><path d="M35.5,57 L33,62.5" fill="none" stroke="#2a1d14" stroke-width="1.2" stroke-linecap="round" stroke-linejoin="round"/></g>
<g id="bN"><path d="M35,9 C48,10.500 58.500,22 62,38.500" fill="none" stroke="#9a9aa8" stroke-width="5.0" stroke-linecap="round" stroke-linejoin="round"/><path d="M35,9 C48,10.500 58.500,22 62,38.500" fill="none" stroke="#10102a" stroke-width="3.0" stroke-linecap="round" stroke-linejoin="round"/><path d="M43.500,8.500 l2.500,3.500 M50,12 l2,3.500 M55.500,17.500 l1.200,3.500 M59.500,24.500 l0.300,3.500 M62,31.500 l-0.800,3.500" fill="none" stroke="#9a9aa8" stroke-width="1.0" stroke-linecap="round" stroke-linejoin="round"/><path d="M23,64 C21.5,57 23.5,50 30.5,45.5 L21,47.5 L17.5,45 L13.5,47.5 C10.5,47 8,44 9,41 L16,27.5 L22,15.5 L23,8 L27.2,13 L30,6 L33.5,11 C45,12 56,22 59,38 C61,48 60,58 57,64 Z" fill="url(#gb)" stroke="#9a9aa8" stroke-width="1.15" stroke-linejoin="round" /><path d="M42.5,26 C44,36 38,42.5 25,46" fill="none" stroke="#9a9aa8" stroke-width="1.1" stroke-linecap="round" stroke-linejoin="round"/><path d="M22.5,24 l5,-1.5 l0.8,2.2 l-3.6,1.6 Z" fill="none" stroke="#9a9aa8" stroke-width="0.9" stroke-linecap="round" stroke-linejoin="round"/><circle cx="11.5" cy="42" r="0.9" fill="#9a9aa8"/><path d="M35.5,57 L33.5,62" fill="none" stroke="#9a9aa8" stroke-width="1.0" stroke-linecap="round" stroke-linejoin="round"/></g>
<g id="wP"><path d="M31.5,38.500 C31.5,47 27,51 22.5,54.5 C19.500,57 18.500,59.500 20,61.400 C21,62.600 22.500,62.800 24,62.800 L45.5,62.800 C47,62.800 48.500,62.600 49.500,61.400 C51,59.500 50,57 47,54.500 C42.500,51 38,47 38,38.500 Z" fill="url(#gw)" stroke="#1c130d" stroke-width="1.5" stroke-linejoin="round" /><path d="M18.5,39.200 C24,30.700 45,30.700 50.5,39.200 Z" fill="url(#gw)" stroke="#1c130d" stroke-width="1.5" stroke-linejoin="round" /><circle cx="34.5" cy="23.5" r="9.6" fill="url(#gw)" stroke="#1c130d" stroke-width="1.5"/><path d="M27,55.500 H42" fill="none" stroke="#2a1d14" stroke-width="1.2" stroke-linecap="round" stroke-linejoin="round"/></g>
<g id="bP"><path d="M31.5,38.500 C31.5,47 27,51 22.5,54.5 C19.500,57 18.500,59.500 20,61.400 C21,62.600 22.500,62.800 24,62.800 L45.5,62.800 C47,62.800 48.500,62.600 49.500,61.400 C51,59.500 50,57 47,54.500 C42.500,51 38,47 38,38.500 Z" fill="url(#gb)" stroke="#9a9aa8" stroke-width="1.15" stroke-linejoin="round" /><path d="M18.5,39.200 C24,30.700 45,30.700 50.5,39.200 Z" fill="url(#gb)" stroke="#9a9aa8" stroke-width="1.15" stroke-linejoin="round" /><circle cx="34.5" cy="23.5" r="9.6" fill="url(#gb)" stroke="#9a9aa8" stroke-width="1.15"/><path d="M27,55.500 H42" fill="none" stroke="#9a9aa8" stroke-width="1.2" stroke-linecap="round" stroke-linejoin="round"/></g>
</defs>
<rect x="0" y="0" width="577" height="577" fill="#000"/>
<rect x="1" y="1" width="71" height="71" fill="#cbb566"/>
<rect x="73" y="1" width="71" height="71" fill="#214556"/>
<rect x="145" y="1" width="71" height="71" fill="#cbb566"/>
<rect x="217" y="1" width="71" height="71" fill="#214556"/>
<rect x="289" y="1" width="71" height="71" fill="#cbb566"/>
<rect x="361" y="1" width="71" height="71" fill="#214556"/>
<rect x="433" y="1" width="71" height="71" fill="#cbb566"/>
<rect x="505" y="1" width="71" height="71" fill="#214556"/>
<rect x="1" y="73" width="71" height="71" fill="#214556"/>
<rect x="73" y="73" width="71" height="71" fill="#cbb566"/>
<rect x="145" y="73" width="71" height="71" fill="#214556"/>
<rect x="217" y="73" width="71" height="71" fill="#cbb566"/>
<rect x="289" y="73" width="71" height="71" fill="#214556"/>
<rect x="361" y="73" width="71" height="71" fill="#cbb566"/>
<rect x="433" y="73" width="71" height="71" fill="#214556"/>
<rect x="505" y="73" width="71" height="71" fill="#cbb566"/>
<rect x="1" y="145" width="71" height="71" fill="#cbb566"/>
<rect x="73" y="145" width="71" height="71" fill="#214556"/>
<rect x="145" y="145" width="71" height="71" fill="#cbb566"/>
<rect x="217" y="145" width="71" height="71" fill="#214556"/>
<rect x="289" y="145" width="71" height="71" fill="#cbb566"/>
<rect x="361" y="145" width="71" height="71" fill="#214556"/>
<rect x="433" y="145" width="71" height="71" fill="#cbb566"/>
<rect x="505" y="145" width="71" height="71" fill="#214556"/>
<rect x="1" y="217" width="71" height="71" fill="#214556"/>
<rect x="73" y="217" width="71" height="71" fill="#cbb566"/>
<rect x="145" y="217" width="71" height="71" fill="#214556"/>
<rect x="217" y="217" width="71" height="71" fill="#cbb566"/>
<rect x="289" y="217" width="71" height="71" fill="#214556"/>
<rect x="361" y="217" width="71" height="71" fill="#cbb566"/>
<rect x="433" y="217" width="71" height="71" fill="#214556"/>
<rect x="505" y="217" width="71" height="71" fill="#cbb566"/>
<rect x="1" y="289" width="71" height="71" fill="#cbb566"/>
<rect x="73" y="289" width="71" height="71" fill="#214556"/>
<rect x="145" y="289" width="71" height="71" fill="#cbb566"/>
<rect x="217" y="289" width="71" height="71" fill="#214556"/>
<rect x="289" y="289" width="71" height="71" fill="#cbb566"/>
<rect x="361" y="289" width="71" height="71" fill="#214556"/>
<rect x="433" y="289" width="71" height="71" fill="#cbb566"/>
<rect x="505" y="289" width="71" height="71" fill="#214556"/>
<rect x="1" y="361" width="71" height="71" fill="#214556"/>
<rect x="73" y="361" width="71" height="71" fill="#cbb566"/>
<rect x="145" y="361" width="71" height="71" fill="#214556"/>
<rect x="217" y="361" width="71" height="71" fill="#cbb566"/>
<rect x="289" y="361" width="71" height="71" fill="#214556"/>
<rect x="361" y="361" width="71" height="71" fill="#cbb566"/>
<rect x="433" y="361" width="71" height="71" fill="#214556"/>
<rect x="505" y="361" width="71" height="71" fill="#cbb566"/>
<rect x="1" y="433" width="71" height="71" fill="#cbb566"/>
<rect x="73" y="433" width="71" height="71" fill="#214556"/>
<rect x="145" y="433" width="71" height="71" fill="#cbb566"/>
<rect x="217" y="433" width="71" height="71" fill="#214556"/>
<rect x="289" y="433" width="71" height="71" fill="#cbb566"/>
<rect x="361" y="433" width="71" height="71" fill="#214556"/>
<rect x="433" y="433" width="71" height="71" fill="#cbb566"/>
<rect x="505" y="433" width="71" height="71" fill="#214556"/>
<rect x="1" y="505" width="71" height="71" fill="#214556"/>
<rect x="73" y="505" width="71" height="71" fill="#cbb566"/>
<rect x="145" y="505" width="71" height="71" fill="#214556"/>
<rect x="217" y="505" width="71" height="71" fill="#cbb566"/>
<rect x="289" y="505" width="71" height="71" fill="#214556"/>
<rect x="361" y="505" width="71" height="71" fill="#cbb566"/>
<rect x="433" y="505" width="71" height="71" fill="#214556"/>
<rect x="505" y="505" width="71" height="71" fill="#cbb566"/>
<clipPath id="dk"><path d="M73,1h71v71h-71zM217,1h71v71h-71zM361,1h71v71h-71zM505,1h71v71h-71zM1,73h71v71h-71zM145,73h71v71h-71zM289,73h71v71h-71zM433,73h71v71h-71zM73,145h71v71h-71zM217,145h71v71h-71zM361,145h71v71h-71zM505,145h71v71h-71zM1,217h71v71h-71zM145,217h71v71h-71zM289,217h71v71h-71zM433,217h71v71h-71zM73,289h71v71h-71zM217,289h71v71h-71zM361,289h71v71h-71zM505,289h71v71h-71zM1,361h71v71h-71zM145,361h71v71h-71zM289,361h71v71h-71zM433,361h71v71h-71zM73,433h71v71h-71zM217,433h71v71h-71zM361,433h71v71h-71zM505,433h71v71h-71zM1,505h71v71h-71zM145,505h71v71h-71zM289,505h71v71h-71zM433,505h71v71h-71z"/></clipPath>
<rect x="0" y="0" width="577" height="577" filter="url(#nz)" clip-path="url(#dk)"/>
<clipPath id="lt"><path d="M1,1h71v71h-71zM145,1h71v71h-71zM289,1h71v71h-71zM433,1h71v71h-71zM73,73h71v71h-71zM217,73h71v71h-71zM361,73h71v71h-71zM505,73h71v71h-71zM1,145h71v71h-71zM145,145h71v71h-71zM289,145h71v71h-71zM433,145h71v71h-71zM73,217h71v71h-71zM217,217h71v71h-71zM361,217h71v71h-71zM505,217h71v71h-71zM1,289h71v71h-71zM145,289h71v71h-71zM289,289h71v71h-71zM433,289h71v71h-71zM73,361h71v71h-71zM217,361h71v71h-71zM361,361h71v71h-71zM505,361h71v71h-71zM1,433h71v71h-71zM145,433h71v71h-71zM289,433h71v71h-71zM433,433h71v71h-71zM73,505h71v71h-71zM217,505h71v71h-71zM361,505h71v71h-71zM505,505h71v71h-71z"/></clipPath>
<g clip-path="url(#lt)"><rect x="0" y="0" width="577" height="577" filter="url(#w1)"/><rect x="0" y="0" width="577" height="577" filter="url(#w2)"/></g>
<use href="#bR" x="0" y="0" filter="url(#sh)"/>
<use href="#bN" x="72" y="0" filter="url(#sh)"/>
<use href="#bB" x="144" y="0" filter="url(#sh)"/>
<use href="#bK" x="288" y="0" filter="url(#sh)"/>
<use href="#bB" x="360" y="0" filter="url(#sh)"/>
<use href="#bN" x="432" y="0" filter="url(#sh)"/>
<use href="#bR" x="504" y="0" filter="url(#sh)"/>
<use href="#bP" x="0" y="72" filter="url(#sh)"/>
<use href="#bP" x="72" y="72" filter="url(#sh)"/>
<use href="#bP" x="216" y="72" filter="url(#sh)"/>
<use href="#bP" x="360" y="72" filter="url(#sh)"/>
<use href="#bP" x="432" y="72" filter="url(#sh)"/>
<use href="#bP" x="504" y="72" filter="url(#sh)"/>
<use href="#bP" x="288" y="144" filter="url(#sh)"/>
<use href="#bP" x="144" y="216" filter="url(#sh)"/>
<use href="#wP" x="288" y="288" filter="url(#sh)"/>
<use href="#bQ" x="504" y="288" filter="url(#sh)"/>
<use href="#wN" x="144" y="360" filter="url(#sh)"/>
<use href="#wQ" x="360" y="360" filter="url(#sh)"/>
<use href="#wP" x="0" y="432" filter="url(#sh)"/>
<use href="#wP" x="72" y="432" filter="url(#sh)"/>
<use href="#wP" x="144" y="432" filter="url(#sh)"/>
<use href="#wP" x="216" y="432" filter="url(#sh)"/>
<use href="#wP" x="360" y="432" filter="url(#sh)"/>
<use href="#wP" x="432" y="432" filter="url(#sh)"/>
<use href="#wP" x="504" y="432" filter="url(#sh)"/>
<use href="#wR" x="0" y="504" filter="url(#sh)"/>
<use href="#wB" x="144" y="504" filter="url(#sh)"/>
<use href="#wK" x="288" y="504" filter="url(#sh)"/>
<use href="#wB" x="360" y="504" filter="url(#sh)"/>
<use href="#wN" x="432" y="504" filter="url(#sh)"/>
<use href="#wR" x="504" y="504" filter="url(#sh)"/>
</svg>
<div class="t" style="left:38px;top:137px;font-size:14px;transform:scaleX(0.85)">8</div>
<div class="t" style="left:82px;top:685px;font-size:14px;transform:scaleX(0.85)">a</div>
<div class="t" style="left:38px;top:209px;font-size:14px;transform:scaleX(0.85)">7</div>
<div class="t" style="left:154px;top:685px;font-size:14px;transform:scaleX(0.85)">b</div>
<div class="t" style="left:38px;top:281px;font-size:14px;transform:scaleX(0.85)">6</div>
<div class="t" style="left:226px;top:685px;font-size:14px;transform:scaleX(0.85)">c</div>
<div class="t" style="left:38px;top:353px;font-size:14px;transform:scaleX(0.85)">5</div>
<div class="t" style="left:298px;top:685px;font-size:14px;transform:scaleX(0.85)">d</div>
<div class="t" style="left:38px;top:425px;font-size:14px;transform:scaleX(0.85)">4</div>
<div class="t" style="left:370px;top:685px;font-size:14px;transform:scaleX(0.85)">e</div>
<div class="t" style="left:38px;top:497px;font-size:14px;transform:scaleX(0.85)">3</div>
<div class="t" style="left:442px;top:685px;font-size:14px;transform:scaleX(0.85)">f</div>
<div class="t" style="left:38px;top:569px;font-size:14px;transform:scaleX(0.85)">2</div>
<div class="t" style="left:514px;top:685px;font-size:14px;transform:scaleX(0.85)">g</div>
<div class="t" style="left:38px;top:641px;font-size:14px;transform:scaleX(0.85)">1</div>
<div class="t" style="left:586px;top:685px;font-size:14px;transform:scaleX(0.85)">h</div>
<div class="a" style="left:627px;top:649px;width:37px;height:37px;box-sizing:border-box;border:1px solid #000;background:#fff"></div>
<div class="vl" style="left:692px;top:82px;height:624px;background:#fff"></div>
<div class="vl" style="left:697px;top:82px;height:626px;background:#000"></div>
<div class="t" style="left:698px;top:82px;font-size:14px;transform:scaleX(0.980);color:#2c3a66;font-weight:bold;">Nuova partita</div>
<div class="t" style="left:699px;top:114px;font-size:14px;transform:scaleX(0.779);color:#1c1cb8;font-weight:normal;text-decoration:underline;text-underline-offset:2px">C00</div>
<div class="t" style="left:723px;top:114px;font-size:14px;transform:scaleX(0.907);color:#3a4668;font-weight:normal;">(French)</div>
<div class="a" style="left:698px;top:130px;width:330px;height:254px;box-sizing:border-box;border:1px solid;border-color:#707070 #fff #fff #707070;background:#fff"></div><div class="a" style="left:699px;top:131px;width:328px;height:252px;box-sizing:border-box;border:1px solid;border-color:#000 #cdcdcd #cdcdcd #000"></div>
<div class="hl" style="left:698px;top:384px;width:330px;background:#fff"></div>
<div class="t" style="left:704.3px;top:137px;font-size:18px;line-height:20px;font-weight:normal">1.</div>
<div class="t" style="left:724.0px;top:137px;font-size:18px;line-height:20px;font-weight:bold">e4</div>
<div class="t" style="left:750.6px;top:137px;font-size:18px;line-height:20px;font-weight:bold">e6</div>
<div class="t" style="left:777.6px;top:137px;font-size:18px;line-height:20px;font-weight:normal">2.</div>
<div class="t" style="left:797.7px;top:137px;font-size:18px;line-height:20px;font-weight:bold">Qf3</div>
<div class="t" style="left:834.9px;top:137px;font-size:18px;line-height:20px;font-weight:bold">Qh4</div>
<div class="t" style="left:875.7px;top:137px;font-size:18px;line-height:20px;font-weight:normal">3.</div>
<div class="t" style="left:895.8px;top:137px;font-size:18px;line-height:20px;font-weight:bold">Nc3</div>
<div class="a" style="left:935px;top:136px;width:20px;height:22px;background:#2a5a9c;"></div>
<div class="t" style="left:936.500px;top:137px;font-size:18px;line-height:20px;font-weight:bold;color:#fff;transform:scaleX(0.85)">c5</div>
<div class="hl" style="left:698px;top:389px;width:330px;background:#000"></div>
<div class="hl" style="left:698px;top:390px;width:330px;background:#fff"></div>
<div class="t" style="left:700px;top:392px;font-size:14px;transform:scaleX(0.876);color:#000;font-weight:normal;">Elenco delle partite</div>
<svg class="a" style="left:1000px;top:394px" width="26" height="10" viewBox="0 0 26 10"><rect x="3.5" y="0.5" width="5" height="4" fill="none" stroke="#000" stroke-width="1"/><rect x="3" y="0" width="6" height="2" fill="#000"/><rect x="1.5" y="3.5" width="5" height="5" fill="#cdcdcd" stroke="#000" stroke-width="1"/><rect x="1" y="3" width="6" height="2" fill="#000"/><path d="M16.5,1.500 L23.5,8.500 M23.5,1.500 L16.5,8.500" stroke="#000" stroke-width="1.700"/></svg>
<div class="a" style="left:698px;top:410px;width:330px;height:136px;box-sizing:border-box;border:1px solid;border-color:#707070 #fff #fff #707070;background:#fff"></div><div class="a" style="left:699px;top:411px;width:328px;height:134px;box-sizing:border-box;border:1px solid;border-color:#000 #cdcdcd #cdcdcd #000"></div>
<div class="hl" style="left:699px;top:544px;width:328px;background:#fff"></div>
<div class="hl" style="left:698px;top:546px;width:330px;background:#fff"></div>
<div class="a" style="left:700px;top:412px;width:24px;height:24px;box-sizing:border-box;border:1px solid;border-color:#fff #000 #000 #fff;background:#cdcdcd"></div><div class="t" style="left:706px;top:416px;font-size:14px;transform:scaleX(0.812);color:#000;font-weight:normal;">Nr</div>
<div class="a" style="left:724px;top:412px;width:51px;height:24px;box-sizing:border-box;border:1px solid;border-color:#fff #000 #000 #fff;background:#cdcdcd"></div><div class="t" style="left:731.4px;top:416px;font-size:14px;transform:scaleX(0.836);color:#000;font-weight:normal;">Bianco</div>
<div class="a" style="left:775px;top:412px;width:73px;height:24px;box-sizing:border-box;border:1px solid;border-color:#fff #000 #000 #fff;background:#cdcdcd"></div><div class="t" style="left:783.4px;top:416px;font-size:14px;transform:scaleX(0.822);color:#000;font-weight:normal;">Elo Bianco</div>
<div class="a" style="left:848px;top:412px;width:40px;height:24px;box-sizing:border-box;border:1px solid;border-color:#fff #000 #000 #fff;background:#cdcdcd"></div><div class="t" style="left:855.7px;top:416px;font-size:14px;transform:scaleX(0.817);color:#000;font-weight:normal;">Nero</div>
<div class="a" style="left:888px;top:412px;width:62px;height:24px;box-sizing:border-box;border:1px solid;border-color:#fff #000 #000 #fff;background:#cdcdcd"></div><div class="t" style="left:896px;top:416px;font-size:14px;transform:scaleX(0.808);color:#000;font-weight:normal;">Elo Nero</div>
<div class="a" style="left:950px;top:412px;width:52px;height:24px;box-sizing:border-box;border:1px solid;border-color:#fff #000 #000 #fff;background:#cdcdcd"></div><div class="t" style="left:957.4px;top:416px;font-size:14px;transform:scaleX(0.844);color:#000;font-weight:normal;">Evento</div>
<div class="a" style="left:1002px;top:412px;width:24px;height:24px;box-sizing:border-box;border:1px solid;border-color:#fff #000 #000 #fff;background:#cdcdcd"></div>
<div class="vl" style="left:1025px;top:413px;height:22px;background:#cdcdcd"></div>
<div class="a" style="left:1008px;top:414px;width:17.500px;height:20px;overflow:hidden"><div class="t" style="left:0px;top:2px;font-size:14px;transform:scaleX(0.851);color:#000;font-weight:normal;">Luog</div></div>
<div class="hl" style="left:700px;top:435px;width:326px;background:#000"></div>
<div class="a" style="left:700px;top:528px;width:326px;height:16px;background:#e6e6e6;background-image:repeating-conic-gradient(#cdcdcd 0% 25%, #ffffff 0% 50%);background-size:2px 2px"></div><div class="hl" style="left:700px;top:528px;width:326px;background:#fff"></div><div class="a" style="left:700px;top:528px;width:16px;height:16px;box-sizing:border-box;border:1px solid;border-color:#fff #000 #000 #fff;background:#cdcdcd"></div><svg class="a" style="left:700px;top:528px" width="16" height="16"><path d="M10,4 L10,12 L5.5,8 Z" fill="#000"/></svg><div class="a" style="left:716px;top:528px;width:147px;height:16px;box-sizing:border-box;border:1px solid;border-color:#fff #000 #000 #fff;background:#cdcdcd"></div><div class="a" style="left:1010px;top:528px;width:16px;height:16px;box-sizing:border-box;border:1px solid;border-color:#fff #000 #000 #fff;background:#cdcdcd"></div><svg class="a" style="left:1010px;top:528px" width="16" height="16"><path d="M6,4 L6,12 L10.5,8 Z" fill="#000"/></svg>
<div class="hl" style="left:698px;top:551px;width:330px;background:#000"></div>
<div class="hl" style="left:698px;top:552px;width:330px;background:#fff"></div>
<div class="t" style="left:700px;top:554px;font-size:14px;transform:scaleX(0.873);color:#000;font-weight:normal;">Database</div>
<svg class="a" style="left:1000px;top:556px" width="26" height="10" viewBox="0 0 26 10"><rect x="3.5" y="0.5" width="5" height="4" fill="none" stroke="#000" stroke-width="1"/><rect x="3" y="0" width="6" height="2" fill="#000"/><rect x="1.5" y="3.5" width="5" height="5" fill="#cdcdcd" stroke="#000" stroke-width="1"/><rect x="1" y="3" width="6" height="2" fill="#000"/><path d="M16.5,1.500 L23.5,8.500 M23.5,1.500 L16.5,8.500" stroke="#000" stroke-width="1.700"/></svg>
<div class="a" style="left:698px;top:572px;width:330px;height:135px;box-sizing:border-box;border:1px solid;border-color:#707070 #fff #fff #707070;background:#fff"></div><div class="a" style="left:699px;top:573px;width:328px;height:133px;box-sizing:border-box;border:1px solid;border-color:#000 #cdcdcd #cdcdcd #000"></div>
<div class="hl" style="left:699px;top:705px;width:328px;background:#fff"></div>
<div class="a" style="left:700px;top:574px;width:94px;height:24px;box-sizing:border-box;border:1px solid;border-color:#fff #000 #000 #fff;background:#cdcdcd"></div><div class="t" style="left:714px;top:578px;font-size:14px;transform:scaleX(0.858);color:#000;font-weight:normal;">Preferito</div>
<div class="a" style="left:794px;top:574px;width:74px;height:24px;box-sizing:border-box;border:1px solid;border-color:#fff #000 #000 #fff;background:#cdcdcd"></div><div class="t" style="left:814px;top:578px;font-size:14px;transform:scaleX(0.862);color:#000;font-weight:normal;">Nome</div>
<div class="a" style="left:868px;top:574px;width:108px;height:24px;box-sizing:border-box;border:1px solid;border-color:#fff #000 #000 #fff;background:#cdcdcd"></div><div class="t" style="left:891px;top:578px;font-size:14px;transform:scaleX(0.885);color:#000;font-weight:normal;">Dimensioni</div>
<div class="a" style="left:976px;top:574px;width:50px;height:24px;box-sizing:border-box;border:1px solid;border-color:#fff #000 #000 #fff;background:#cdcdcd"></div><div class="t" style="left:995.5px;top:578px;font-size:14px;transform:scaleX(0.904);color:#000;font-weight:normal;">Apri</div>
<div class="vl" style="left:1025px;top:575px;height:22px;background:#cdcdcd"></div>
<div class="hl" style="left:700px;top:597px;width:326px;background:#000"></div>
<svg class="a" style="left:773px;top:579px" width="16" height="14" viewBox="0 0 16 14"><path d="M1.500,1 L14.500,1 L8,12.500 Z" fill="#d6d6d6"/><path d="M8,12.500 L1.500,1 L14.500,1" fill="none" stroke="#707070" stroke-width="1"/><path d="M14.500,1 L8,12.500" fill="none" stroke="#fff" stroke-width="1"/></svg>
<div class="a" style="left:700px;top:598px;width:326px;height:24px;background:#24569a;"></div>
<svg class="a" style="left:705px;top:603px" width="16" height="16" viewBox="0 0 18 18"><path d="M9,1.500 L11.200,6.800 L16.800,7.200 L12.500,10.900 L13.900,16.500 L9,13.400 L4.100,16.500 L5.500,10.900 L1.200,7.200 L6.800,6.800 Z" fill="#8a8e98" stroke="#6a7080" stroke-width="0.6"/></svg>
<div class="t" style="left:797px;top:600px;font-size:17px;transform:scaleX(0.888);color:#fff;font-weight:bold;">Appunti</div>
<div class="t" style="left:871.6px;top:601px;font-size:16px;transform:scaleX(0.764);color:#fff;font-weight:normal;">0</div>
<svg class="a" style="left:978px;top:602px" width="22" height="18" viewBox="0 0 22 18"><path d="M2,3.500 h6 l1.500,2 h9 v10.500 h-16.500 z" fill="#52bc1c"/><path d="M1.500,16.500 L5,7.500 h16 L17.500,16.500 Z" fill="#b4e01e"/><path d="M1.500,16.500 L5,7.500" fill="none" stroke="#3c9414" stroke-width="0.8"/><path d="M13,6.500 L19,2 M16,1.500 L19.500,1.500 L19.500,5" stroke="#e8d8c8" stroke-width="1.600" fill="none"/></svg>
<div class="a" style="left:700px;top:689px;width:326px;height:16px;background:#e6e6e6;background-image:repeating-conic-gradient(#cdcdcd 0% 25%, #ffffff 0% 50%);background-size:2px 2px"></div><div class="hl" style="left:700px;top:689px;width:326px;background:#fff"></div><div class="a" style="left:700px;top:689px;width:16px;height:16px;box-sizing:border-box;border:1px solid;border-color:#fff #000 #000 #fff;background:#cdcdcd"></div><svg class="a" style="left:700px;top:689px" width="16" height="16"><path d="M10,4 L10,12 L5.5,8 Z" fill="#000"/></svg><div class="a" style="left:716px;top:689px;width:168px;height:16px;box-sizing:border-box;border:1px solid;border-color:#fff #000 #000 #fff;background:#cdcdcd"></div><div class="a" style="left:1010px;top:689px;width:16px;height:16px;box-sizing:border-box;border:1px solid;border-color:#fff #000 #000 #fff;background:#cdcdcd"></div><svg class="a" style="left:1010px;top:689px" width="16" height="16"><path d="M6,4 L6,12 L10.5,8 Z" fill="#000"/></svg>
<div class="vl" style="left:691px;top:82px;height:625px;background:#000"></div>
<div class="hl" style="left:4px;top:706px;width:688px;background:#000"></div>
<div class="hl" style="left:4px;top:707px;width:694px;background:#f4f4f4"></div>
<div class="sunk" style="left:4px;top:709px;width:228px;height:26px"></div>
<div class="vl" style="left:233px;top:711px;height:24px;background:#f0f0f0"></div>
<div class="sunk" style="left:236px;top:709px;width:228px;height:26px"></div>
<div class="vl" style="left:465px;top:711px;height:24px;background:#f0f0f0"></div>
<div class="vl" style="left:238px;top:711px;height:23px;background:#8a8a8a"></div>
<div class="sunk" style="left:468px;top:709px;width:228px;height:26px"></div>
<div class="vl" style="left:697px;top:711px;height:24px;background:#f0f0f0"></div>
<div class="vl" style="left:470px;top:711px;height:23px;background:#8a8a8a"></div>
<div class="t" style="left:13.3px;top:714px;font-size:14px;transform:scaleX(0.981);color:#2c3a66;font-weight:normal;">[Appunti]: tutto/0</div>
<div class="t" style="left:240.3px;top:714px;font-size:14px;transform:scaleX(0.822);color:#2c3a66;font-weight:normal;">ECO Caricato.</div>
<div class="sunk" style="left:700px;top:709px;width:114px;height:26px"></div>
<div class="t" style="left:703px;top:714px;font-size:14px;transform:scaleX(0.900);color:#2c3a66;font-weight:normal;">Intervallo di mossa:</div>
<div class="sunk" style="left:815px;top:709px;width:89px;height:26px"></div>
<div class="a" style="left:824px;top:710px;width:1px;height:4px;background:#000;"></div>
<div class="a" style="left:824px;top:731px;width:1px;height:4px;background:#000;"></div>
<div class="a" style="left:831px;top:710px;width:1px;height:4px;background:#000;"></div>
<div class="a" style="left:831px;top:731px;width:1px;height:4px;background:#000;"></div>
<div class="a" style="left:838px;top:710px;width:1px;height:4px;background:#000;"></div>
<div class="a" style="left:838px;top:731px;width:1px;height:4px;background:#000;"></div>
<div class="a" style="left:846px;top:710px;width:1px;height:4px;background:#000;"></div>
<div class="a" style="left:846px;top:731px;width:1px;height:4px;background:#000;"></div>
<div class="a" style="left:853px;top:710px;width:1px;height:4px;background:#000;"></div>
<div class="a" style="left:853px;top:731px;width:1px;height:4px;background:#000;"></div>
<div class="a" style="left:860px;top:710px;width:1px;height:4px;background:#000;"></div>
<div class="a" style="left:860px;top:731px;width:1px;height:4px;background:#000;"></div>
<div class="a" style="left:867px;top:710px;width:1px;height:4px;background:#000;"></div>
<div class="a" style="left:867px;top:731px;width:1px;height:4px;background:#000;"></div>
<div class="a" style="left:875px;top:710px;width:1px;height:4px;background:#000;"></div>
<div class="a" style="left:875px;top:731px;width:1px;height:4px;background:#000;"></div>
<div class="a" style="left:882px;top:710px;width:1px;height:4px;background:#000;"></div>
<div class="a" style="left:882px;top:731px;width:1px;height:4px;background:#000;"></div>
<div class="a" style="left:889px;top:710px;width:1px;height:4px;background:#000;"></div>
<div class="a" style="left:889px;top:731px;width:1px;height:4px;background:#000;"></div>
<div class="a" style="left:897px;top:710px;width:1px;height:4px;background:#000;"></div>
<div class="a" style="left:897px;top:731px;width:1px;height:4px;background:#000;"></div>
<div class="hl" style="left:818px;top:721px;width:83px;background:#000"></div>
<div class="hl" style="left:818px;top:722px;width:83px;background:#fff"></div>
<div class="a" style="left:840px;top:715px;width:11px;height:15px;box-sizing:border-box;border:1px solid;border-color:#fff #000 #000 #fff;background:#cdcdcd"></div>
<div class="sunk" style="left:906px;top:709px;width:104px;height:26px"></div>
<div class="t" style="left:909px;top:714px;font-size:14px;transform:scaleX(0.812);color:#2c3a66;font-weight:normal;">3s</div>
<svg class="a" style="left:1012px;top:720px" width="16" height="16" viewBox="0 0 16 16"><path d="M15.500,1.500 L2,15 M15.500,6.500 L7,15 M15.500,11.500 L12,15" stroke="#6e6e6e" stroke-width="1.800"/><path d="M15.500,3 L3.500,15 M15.500,8 L8.500,15 M15.500,13 L13.500,15" stroke="#fff" stroke-width="1.200"/></svg>
</body></html>
